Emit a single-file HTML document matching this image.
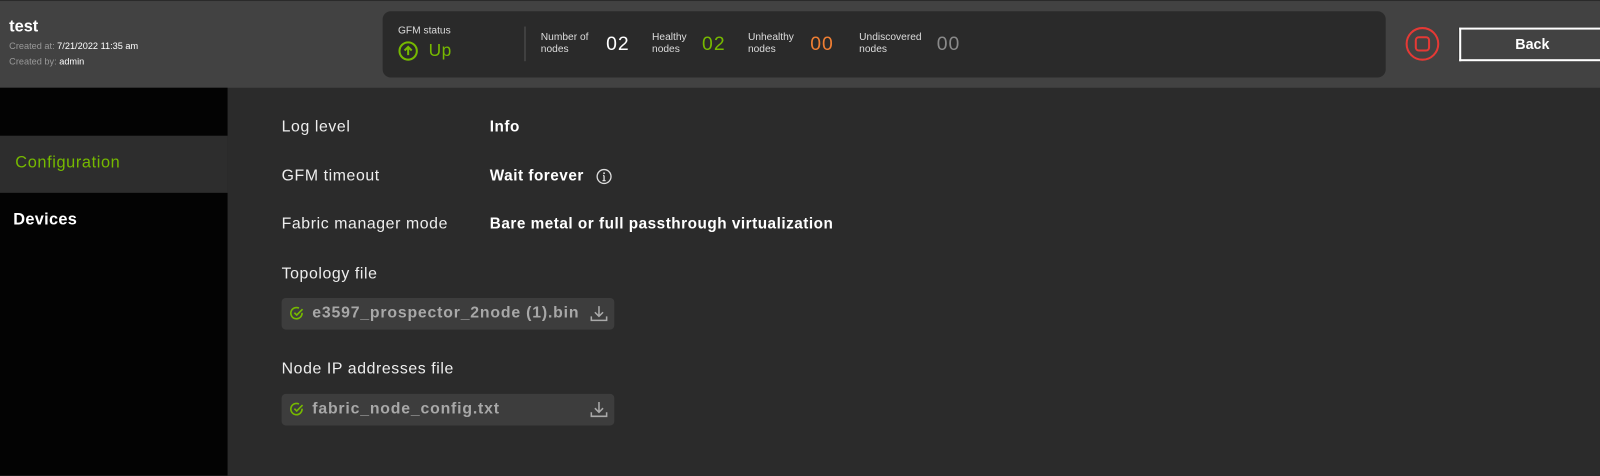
<!DOCTYPE html>
<html><head><meta charset="utf-8"><style>
*{margin:0;padding:0;box-sizing:border-box}
body{width:1600px;height:470px;overflow:hidden;background:#2b2b2b;font-family:"Liberation Sans",sans-serif;color:#fff;position:relative}
#w{position:absolute;left:0;top:0;width:1568px;height:461px;transform:scale(1.0204);transform-origin:0 0}
.hdr{position:absolute;left:0;top:0;width:1568px;height:86px;background:#424242;border-top:1px solid #2a2a2a}
.abs{position:absolute;white-space:nowrap}
.side{position:absolute;left:0;top:86px;width:223px;height:380px;background:#030303}
.act{position:absolute;left:0;top:133px;width:223px;height:56px;background:#2d2d2d}
.box{position:absolute;left:375px;top:11px;width:983px;height:65px;background:#2a2a2a;border-radius:8px}
.small{font-size:10px;line-height:12px;color:#ddd}
.big{font-size:19px;letter-spacing:1px}
.lbl{font-size:15.5px;color:#eee;letter-spacing:0.6px}
.val{font-size:15px;font-weight:bold;color:#fff;letter-spacing:0.5px}
.file{position:absolute;left:276px;width:326px;height:31px;background:#3d3d3d;border-radius:4px}
.file span{position:absolute;left:30px;top:6px;font-size:15.5px;font-weight:bold;color:#a8a8a8;letter-spacing:0.8px}
</style></head><body><div id="w">
<div class="hdr"></div>
<div class="abs" style="left:9px;top:18px;font-size:16px;font-weight:bold">test</div>
<div class="abs" style="left:9px;top:40px;font-size:9px;color:#999">Created at: <span style="color:#fff">7/21/2022 11:35 am</span></div>
<div class="abs" style="left:9px;top:55px;font-size:9px;color:#999">Created by: <span style="color:#fff">admin</span></div>
<div class="box"></div>
<div class="abs small" style="left:390px;top:25px">GFM status</div>
<svg class="abs" style="left:390px;top:40px" width="20" height="20"><circle cx="10" cy="10" r="8.5" fill="none" stroke="#76b900" stroke-width="2"/><path d="M10 14V6M6.5 9.5L10 6l3.5 3.5" fill="none" stroke="#76b900" stroke-width="2"/></svg>
<div class="abs" style="left:420px;top:40px;font-size:17px;color:#76b900;letter-spacing:0.5px">Up</div>
<div class="abs" style="left:514px;top:26px;width:1px;height:34px;background:#555"></div>
<div class="abs small" style="left:530px;top:31px">Number of<br>nodes</div>
<div class="abs big" style="left:594px;top:33px">02</div>
<div class="abs small" style="left:639px;top:31px">Healthy<br>nodes</div>
<div class="abs big" style="left:688px;top:33px;color:#76b900">02</div>
<div class="abs small" style="left:733px;top:31px">Unhealthy<br>nodes</div>
<div class="abs big" style="left:794px;top:33px;color:#ef7e33">00</div>
<div class="abs small" style="left:842px;top:31px">Undiscovered<br>nodes</div>
<div class="abs big" style="left:918px;top:33px;color:#8a8a8a">00</div>
<svg class="abs" style="left:1377px;top:26px" width="34" height="34"><circle cx="17" cy="17" r="15.5" fill="none" stroke="#e53935" stroke-width="2"/><rect x="10.5" y="10.5" width="13" height="13" rx="3" fill="none" stroke="#e53935" stroke-width="2"/></svg>
<div class="abs" style="left:1430px;top:27px;width:200px;height:33px;border:2px solid #fff;border-right:none;box-shadow:0 0 1px #000"></div>
<div class="abs" style="left:1485px;top:35px;font-size:14px;font-weight:bold">Back</div>
<div class="side"></div><div class="act"></div>
<div class="abs" style="left:15px;top:151px;font-size:16px;color:#76b900;letter-spacing:0.6px">Configuration</div>
<div class="abs" style="left:13px;top:207px;font-size:16px;font-weight:bold;letter-spacing:0.3px">Devices</div>
<div class="abs lbl" style="left:276px;top:116px">Log level</div>
<div class="abs val" style="left:480px;top:116px">Info</div>
<div class="abs lbl" style="left:276px;top:164px">GFM timeout</div>
<div class="abs val" style="left:480px;top:164px">Wait forever</div>
<svg class="abs" style="left:584px;top:165px" width="16" height="16"><circle cx="8" cy="8" r="6.8" fill="none" stroke="#ddd" stroke-width="1.3"/><path d="M8 7v5M6.5 12h3M7 7h1" stroke="#ddd" stroke-width="1.3"/><circle cx="8" cy="4.7" r=".9" fill="#ddd"/></svg>
<div class="abs lbl" style="left:276px;top:211px">Fabric manager mode</div>
<div class="abs val" style="left:480px;top:211px">Bare metal or full passthrough virtualization</div>
<div class="abs lbl" style="left:276px;top:260px">Topology file</div>
<div class="file" style="top:292px"><span>e3597_prospector_2node (1).bin</span></div>
<div class="abs lbl" style="left:276px;top:353px">Node IP addresses file</div>
<div class="file" style="top:386px"><span>fabric_node_config.txt</span></div>
<svg class="abs" style="left:284px;top:300px" width="14" height="14"><path d="M12 6.5A5.5 5.5 0 1 1 9 2M4.5 6.5l2.3 2.3L12.5 3" fill="none" stroke="#76b900" stroke-width="1.6"/></svg>
<svg class="abs" style="left:284px;top:394px" width="14" height="14"><path d="M12 6.5A5.5 5.5 0 1 1 9 2M4.5 6.5l2.3 2.3L12.5 3" fill="none" stroke="#76b900" stroke-width="1.6"/></svg>
<svg class="abs" style="left:578px;top:299px" width="18" height="17"><path d="M9 1v10M5 7l4 4 4-4M1.5 11v4h15v-4" fill="none" stroke="#aaa" stroke-width="1.5"/></svg>
<svg class="abs" style="left:578px;top:393px" width="18" height="17"><path d="M9 1v10M5 7l4 4 4-4M1.5 11v4h15v-4" fill="none" stroke="#aaa" stroke-width="1.5"/></svg>
</div></body></html>
